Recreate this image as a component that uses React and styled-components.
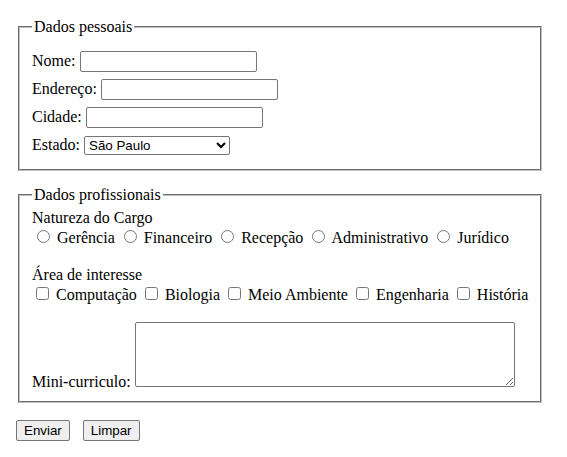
import React from "react";
import styled, { createGlobalStyle } from "styled-components";

const GlobalStyle = createGlobalStyle`
	body {
		margin: 0;
		background: #ffffff;
		color: #000000;
		font-family: "Liberation Serif", "Times New Roman", serif;
		font-size: 16px;
	}
`;

const Page = styled.form`
	padding: 18px 0 16px 16px;
`;

const Fieldset = styled.fieldset`
	width: 496px;
	margin: ${({ $spaced }) => ($spaced ? "15px 2px 0" : "0 2px")};
	padding: ${({ $spaced }) => ($spaced ? "5.6px 12px 10px" : "5.6px 12px 13px")};
	border: 2px groove rgb(192, 192, 192);
	min-inline-size: auto;
`;

const Legend = styled.legend`
	padding: 0 2px;
`;

const Rows = styled.div`
	display: flex;
	flex-direction: column;
	gap: 7px;
	padding-top: 9px;
`;

const Row = styled.div`
	display: flex;
	align-items: center;
	gap: 4px;
	height: 21px;
`;

const TextInput = styled.input`
	box-sizing: border-box;
	width: 177px;
	height: 21px;
	padding: 1px 2px;
	border: 1px solid #767676;
	border-radius: 2px;
	font: 13.33px "Liberation Sans", Arial, sans-serif;
`;

const Select = styled.select`
	box-sizing: border-box;
	width: 146px;
	height: 19px;
	font: 13.33px "Liberation Sans", Arial, sans-serif;
	color: #000;
	border: 1px solid #767676;
	border-radius: 2px;
	background: #fff;
`;

const Caption = styled.div``;

const Options = styled.div`
	white-space: nowrap;
`;

const Spacer = styled.div`
	height: 18.4px;
`;

const Radio = styled.input.attrs({ type: "radio" })`
	width: 13px;
	height: 13px;
	margin: 3px 3px 0 5px;
`;

const Checkbox = styled.input.attrs({ type: "checkbox" })`
	width: 13px;
	height: 13px;
	margin: 3px 3px 3px 4px;
`;

const ResumeLine = styled.div``;

const Textarea = styled.textarea`
	box-sizing: border-box;
	width: 380px;
	height: 65px;
	margin: 0;
	border: 1px solid #767676;
	border-radius: 2px;
	font: 13.33px "Liberation Mono", monospace;
	vertical-align: baseline;
`;

const Actions = styled.div`
	display: flex;
	gap: 13px;
	margin-top: 17px;
`;

const Button = styled.button`
	box-sizing: border-box;
	height: 21px;
	padding: 1px 7px;
	font: 13.33px "Liberation Sans", Arial, sans-serif;
	color: #000;
	background: #efefef;
	border: 1px solid #767676;
	border-radius: 2px;
`;

const cargos = ["Gerência", "Financeiro", "Recepção", "Administrativo", "Jurídico"];
const areas = ["Computação", "Biologia", "Meio Ambiente", "Engenharia", "História"];

export default function App() {
	return (
		<>
			<GlobalStyle />
			<Page onSubmit={(e) => e.preventDefault()}>
				<Fieldset>
					<Legend>Dados pessoais</Legend>
					<Rows>
						<Row>
							<label htmlFor="nome">Nome:</label>
							<TextInput id="nome" type="text" />
						</Row>
						<Row>
							<label htmlFor="endereco">Endereço:</label>
							<TextInput id="endereco" type="text" />
						</Row>
						<Row>
							<label htmlFor="cidade">Cidade:</label>
							<TextInput id="cidade" type="text" />
						</Row>
						<Row>
							<label htmlFor="estado">Estado:</label>
							<Select id="estado" defaultValue="SP">
								<option value="SP">São Paulo</option>
								<option value="RJ">Rio de Janeiro</option>
								<option value="MG">Minas Gerais</option>
							</Select>
						</Row>
					</Rows>
				</Fieldset>

				<Fieldset $spaced>
					<Legend>Dados profissionais</Legend>
					<Caption>Natureza do Cargo</Caption>
					<Options>
						{cargos.map((c) => (
							<React.Fragment key={c}>
								<label>
									<Radio name="cargo" value={c} /> {c}
								</label>{" "}
							</React.Fragment>
						))}
					</Options>
					<Spacer />
					<Caption>Área de interesse</Caption>
					<Options>
						{areas.map((a) => (
							<React.Fragment key={a}>
								<label>
									<Checkbox name="area" value={a} /> {a}
								</label>{" "}
							</React.Fragment>
						))}
					</Options>
					<Spacer />
					<ResumeLine>
						<label htmlFor="curriculo">Mini-curriculo:</label>{" "}
						<Textarea id="curriculo" />
					</ResumeLine>
				</Fieldset>

				<Actions>
					<Button type="submit">Enviar</Button>
					<Button type="reset">Limpar</Button>
				</Actions>
			</Page>
		</>
	);
}
